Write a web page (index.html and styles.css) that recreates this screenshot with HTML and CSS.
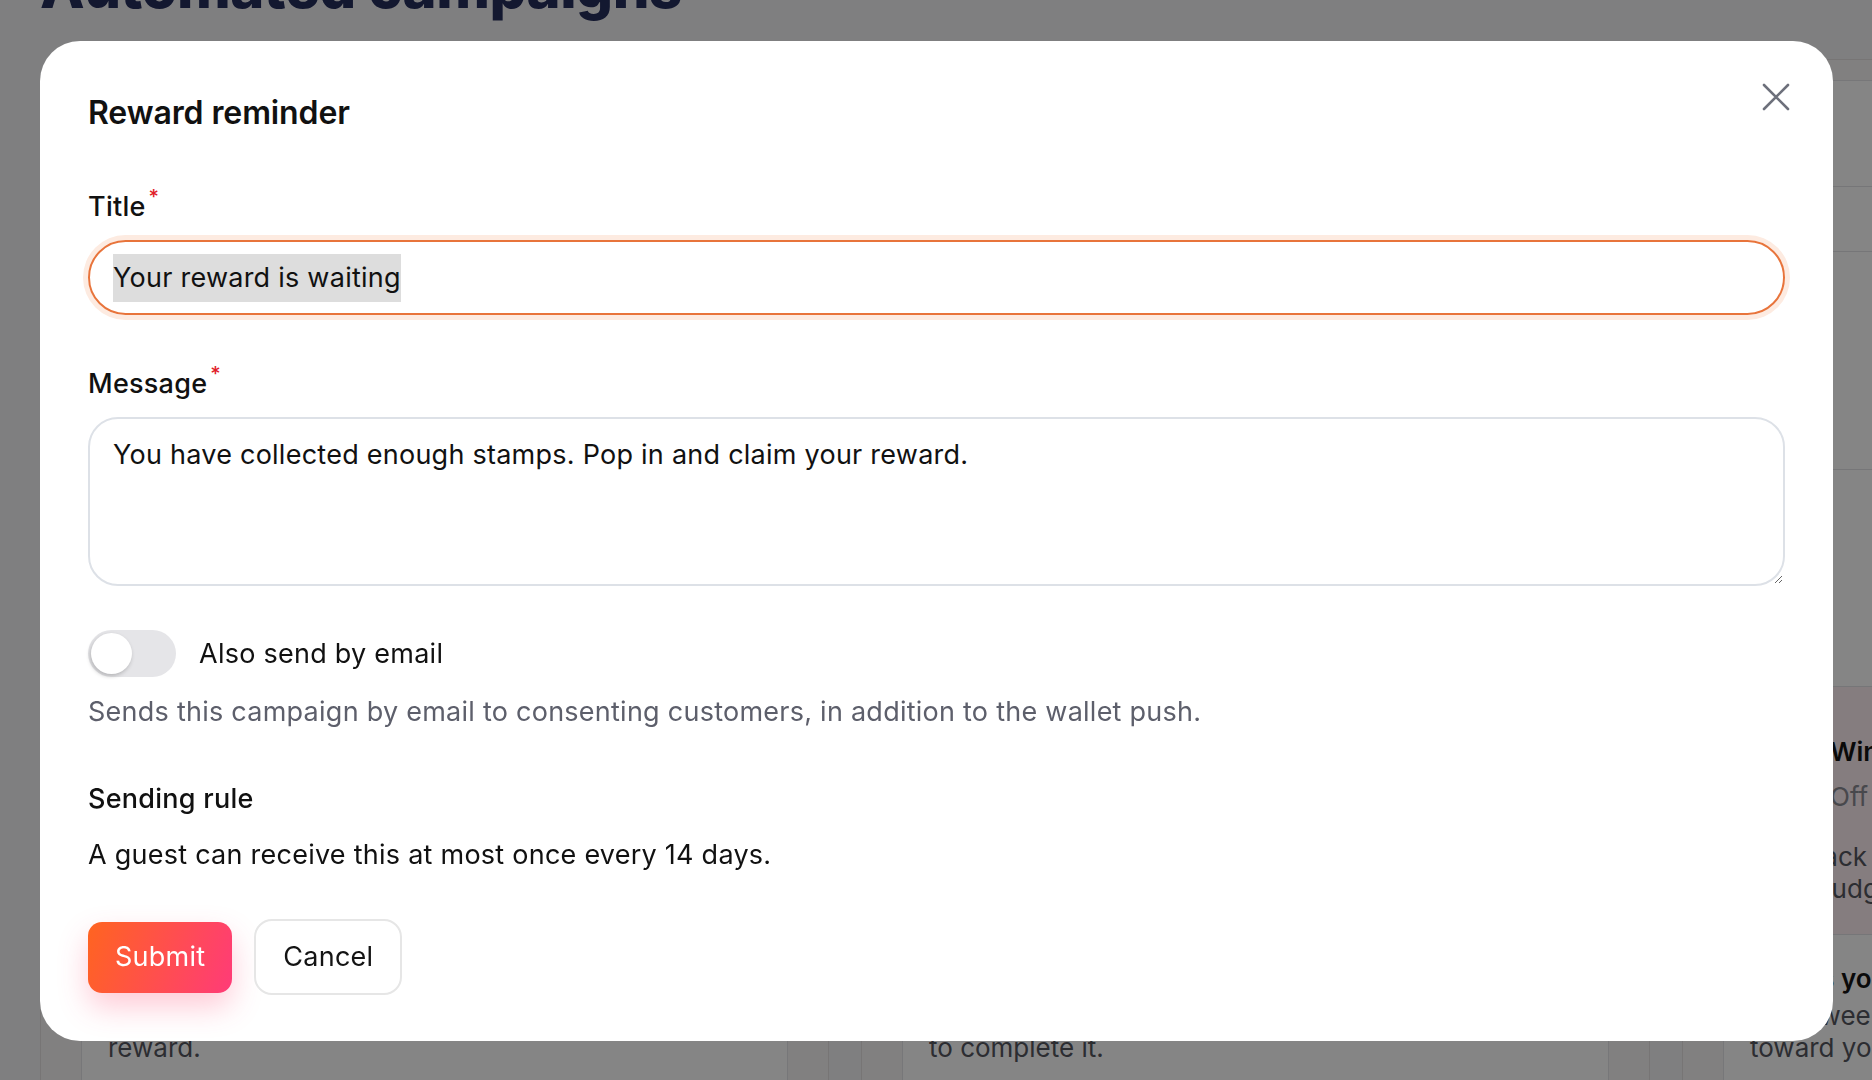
FILE: index.html
```html
<!DOCTYPE html>
<html lang="en">
<head>
<meta charset="utf-8">
<title>Automated campaigns – Reward reminder</title>
<link rel="stylesheet" href="styles.css">
</head>
<body>
<div class="page">
  <h1 class="page-title">Automated campaigns</h1>
  <div class="columns">
    <section class="col">
      <div class="col-cards">
        <div class="row r1"><span class="row-head">Visits</span></div>
        <div class="row r2"></div>
        <div class="row r3"><div class="row-title">Welcome</div></div>
        <div class="row r4"><div class="row-title">Birthday</div></div>
        <div class="row r5"><div class="row-title">Thank you</div></div>
        <div class="row r6">
          <div class="row-title">Reward ready</div>
          <p class="row-desc">Let guests know when they have earned a<br>reward.</p>
        </div>
      </div>
    </section>
    <section class="col">
      <div class="col-cards">
        <div class="row r1"><span class="row-head">Stamps</span></div>
        <div class="row r2"></div>
        <div class="row r3"><div class="row-title">First stamp</div></div>
        <div class="row r4"><div class="row-title">Halfway</div></div>
        <div class="row r5"><div class="row-title">Almost there</div></div>
        <div class="row r6">
          <div class="row-title">One stamp left</div>
          <p class="row-desc">Tell guests they need just one more visit<br>to complete it.</p>
        </div>
      </div>
    </section>
    <section class="col">
      <div class="col-cards">
        <div class="row r1"><span class="row-head">Re</span></div>
        <div class="row r2"></div>
        <div class="row r3"></div>
        <div class="row r4"></div>
        <div class="row r5 pink">
          <div class="win-head">
            <span class="win-icon"></span>
            <div>
              <div class="row-title">Win back lapsed guests</div>
              <div class="row-status">Off</div>
            </div>
          </div>
          <p class="row-desc">Bring back guests who have not visited<br>with a budget-friendly offer.</p>
        </div>
        <div class="row r6">
          <div class="row-title">Shows your guests progress</div>
          <p class="row-desc">In between visits, show guests how far<br>toward your next reward they are.</p>
        </div>
      </div>
    </section>
  </div>
</div>

<div class="overlay">
  <div class="modal" role="dialog" aria-labelledby="modal-title">
    <div class="modal-head">
      <h2 class="modal-title" id="modal-title">Reward reminder</h2>
      <button class="close" type="button" aria-label="Close">
        <svg viewBox="0 0 30 30" width="30" height="30" aria-hidden="true">
          <path d="M3 3 L27 27 M27 3 L3 27" fill="none" stroke="#6d707b" stroke-width="2.6" stroke-linecap="round"/>
        </svg>
      </button>
    </div>

    <div class="field">
      <label class="label">Title<sup class="req">*</sup></label>
      <div class="input is-focused" role="textbox"><span class="selection">Your reward is waiting</span></div>
    </div>

    <div class="field">
      <label class="label">Message<sup class="req">*</sup></label>
      <textarea class="textarea" readonly>You have collected enough stamps. Pop in and claim your reward.</textarea>
    </div>

    <div class="toggle-row">
      <span class="switch" role="switch" aria-checked="false"><span class="knob"></span></span>
      <span class="toggle-label">Also send by email</span>
    </div>
    <p class="help">Sends this campaign by email to consenting customers, in addition to the wallet push.</p>

    <h3 class="rule-title">Sending rule</h3>
    <p class="rule-text">A guest can receive this at most once every 14 days.</p>

    <div class="actions">
      <button class="btn btn-primary" type="button">Submit</button>
      <button class="btn btn-secondary" type="button">Cancel</button>
    </div>
  </div>
</div>
</body>
</html>
```

FILE: styles.css
```css
html, body {
  margin: 0;
  width: 1872px;
  height: 1080px;
  overflow: hidden;
}

body {
  background: #f4f4f6;
  font-family: Inter, "Noto Sans", "Liberation Sans", sans-serif;
  color: #141414;
}

/* ---------- background page ---------- */
.page {
  padding-left: 40px;
}

.page-title {
  margin: -47px 0 0;
  font-size: 58px;
  line-height: 68px;
  font-weight: 800;
  letter-spacing: -0.5px;
  color: #262f5c;
  white-space: nowrap;
}

.columns {
  display: grid;
  grid-template-columns: repeat(3, 789px);
  column-gap: 32px;
  margin-top: 38px;
}

.col {
  background: #f7f6f6;
  border: 1px solid #e4e1e1;
  border-radius: 24px;
  padding: 20px 40px;
  height: 1100px;
}

.col-cards {
  background: #ffffff;
  border: 1px solid #e4e4e8;
  border-radius: 20px;
  overflow: hidden;
}

.row {
  box-sizing: border-box;
  border-top: 1px solid #e3e3e7;
  padding: 0 26px;
  font-size: 26px;
  white-space: nowrap;
}

.row:first-child { border-top: 0; }

.r1 { height: 105px; display: flex; align-items: center; }
.r2 { height: 65px; }
.r3 { height: 218px; padding-top: 40px; }
.r4 { height: 217px; padding-top: 40px; }
.r5 { height: 248px; padding-top: 50px; }
.r6 { height: 240px; padding-top: 29px; }

.pink { background: #fff0f3; }

.row-head { font-weight: 700; font-size: 28px; }

.row-title {
  font-weight: 600;
  line-height: 30px;
  color: #141414;
}

.row-status {
  margin-top: 15px;
  line-height: 30px;
  color: #8a8a93;
}

.row-desc {
  margin: 6px 0 0;
  line-height: 32px;
  color: #55565f;
}

.r5 .row-desc {
  margin: 29px 0 0 -15px;
}

.win-head {
  display: flex;
  gap: 24px;
}

.win-icon {
  width: 56px;
  height: 56px;
  border-radius: 16px;
  background: #ffd9e1;
}

/* ---------- overlay + modal ---------- */
.overlay {
  position: fixed;
  inset: 0;
  background: rgba(0, 0, 0, 0.48);
  padding: 41px 39px 39px 40px;
  box-sizing: border-box;
}

.modal {
  background: #ffffff;
  border-radius: 40px;
  height: 1000px;
  box-sizing: border-box;
  padding: 50px 48px 46px;
  font-size: 27px;
  line-height: 40px;
  letter-spacing: 0.25px;
  color: #111111;
}

.modal-head {
  display: flex;
  justify-content: space-between;
  align-items: flex-start;
}

.modal-title {
  margin: 0;
  font-size: 32px;
  line-height: 44px;
  font-weight: 600;
  letter-spacing: -0.1px;
}

.close {
  width: 30px;
  height: 30px;
  margin: -9px -6px 0 0;
  padding: 0;
  border: 0;
  background: none;
  display: block;
}

.close svg { display: block; }

.field {
  display: flex;
  flex-direction: column;
  margin-top: 52px;
}

.field + .field { margin-top: 49px; }

.label {
  margin-bottom: 13px;
  font-weight: 500;
}

.req {
  color: #e11d2a;
  font-size: 20px;
  line-height: 20px;
  vertical-align: top;
  margin-left: 3px;
}

.input {
  height: 75px;
  box-sizing: border-box;
  border: 2px solid #e8743b;
  border-radius: 38px;
  box-shadow: 0 0 0 5px #fdebe1;
  padding: 0 23px;
  display: flex;
  align-items: center;
}

.selection {
  display: inline-block;
  line-height: 48px;
  background: #dddddd;
}

.textarea {
  display: block;
  width: 100%;
  height: 169px;
  box-sizing: border-box;
  border: 2px solid #dde1e7;
  border-radius: 30px;
  padding: 16px 23px;
  font: inherit;
  letter-spacing: inherit;
  color: inherit;
  resize: vertical;
  outline: none;
  background: #fff;
}

.toggle-row {
  margin-top: 44px;
  height: 47px;
  display: flex;
  align-items: center;
  gap: 23px;
}

.switch {
  width: 88px;
  height: 47px;
  box-sizing: border-box;
  border-radius: 24px;
  background: #e5e5e8;
  display: flex;
  align-items: center;
  padding: 0 3px;
}

.knob {
  width: 41px;
  height: 41px;
  border-radius: 50%;
  background: #ffffff;
  box-shadow: -1px 2px 4px rgba(0, 0, 0, 0.22);
}

.help {
  margin: 15px 0 0;
  color: #5d5f6b;
}

.rule-title {
  margin: 47px 0 0;
  font-size: 27px;
  line-height: 40px;
  font-weight: 500;
}

.rule-text {
  margin: 16px 0 0;
}

.actions {
  margin-top: 44px;
  height: 76px;
  display: flex;
  align-items: center;
  gap: 22px;
}

.btn {
  font: inherit;
  font-size: 27px;
  letter-spacing: 0.25px;
  cursor: pointer;
}

.btn-primary {
  height: 71px;
  padding: 0 27px;
  border: 0;
  border-radius: 14px;
  background: linear-gradient(110deg, #ff6420 0%, #ff3b78 100%);
  color: #ffffff;
  box-shadow: 0 14px 30px rgba(255, 70, 110, 0.28);
}

.btn-secondary {
  height: 76px;
  padding: 0 27px;
  border: 2px solid #e6e6e6;
  border-radius: 18px;
  background: #ffffff;
  color: #141414;
}
```
